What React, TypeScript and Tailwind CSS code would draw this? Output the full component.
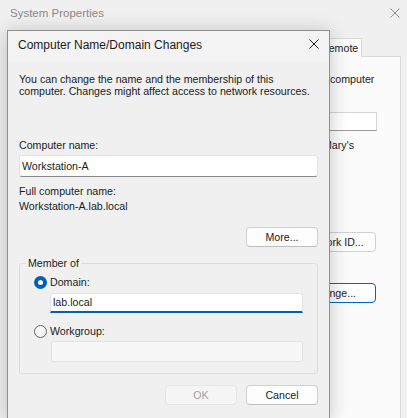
import React from "react";

function CloseIcon({ className }: { className?: string }) {
  return (
    <svg width="10" height="10" viewBox="0 0 10 10" className={className} fill="none">
      <path d="M0.5 0.5L9.5 9.5M9.5 0.5L0.5 9.5" stroke="currentColor" strokeWidth="1" />
    </svg>
  );
}

function Radio({ checked }: { checked?: boolean }) {
  if (checked) {
    return (
      <span className="flex h-[13px] w-[13px] shrink-0 items-center justify-center rounded-full bg-[#005fb8]">
        <span className="h-[5px] w-[5px] rounded-full bg-white" />
      </span>
    );
  }
  return <span className="h-[13px] w-[13px] shrink-0 rounded-full border border-[#616161] bg-[#f7f7f7]" />;
}

function Button({ children, disabled, className = "" }: { children: React.ReactNode; disabled?: boolean; className?: string }) {
  return (
    <button
      className={
        disabled
          ? `flex h-[20px] w-[72px] items-center justify-center rounded-[4px] border border-[#e6e6e6] bg-[#f5f5f5] text-[#a0a0a0] ${className}`
          : `flex h-[20px] w-[72px] items-center justify-center rounded-[4px] border border-[#d0d0d0] border-b-[#bdbdbd] bg-[#fdfdfd] text-[#1b1b1b] ${className}`
      }
    >
      {children}
    </button>
  );
}

export default function App() {
  return (
    <div className="relative h-[418px] w-[407px] overflow-hidden bg-[#f0f0f0] font-['Liberation_Sans',Arial,sans-serif] text-[10.65px] leading-[15px] text-[#1b1b1b]">
      {/* System Properties (inactive window behind) */}
      <div className="flex h-[38px] items-start justify-between pl-[10px] pr-[7px] pt-[6px]">
        <span className="text-[11.5px] text-[#8a8a8a]">System Properties</span>
        <CloseIcon className="mt-[2px] text-[#8d8d8d]" />
      </div>
      <div className="ml-[300px] flex flex-col">
        <div className="relative -mb-px flex h-[19px] items-start self-start ml-[14px] border border-b-0 border-[#d9d9d9] bg-[#fbfbfb] pl-[6px] pr-[3px] pt-[2px]">
          Remote
        </div>
        <div className="flex h-[380px] w-[101px] flex-col border border-[#d9d9d9] bg-[#fbfbfb]">
          <div className="mt-[15px] whitespace-nowrap pl-[29px]">computer</div>
          <div className="mt-[25px] h-[19px] w-[76px] self-end mr-[23px] border border-[#d4d4d4] border-b-[#9a9a9a] bg-white" />
          <div className="mt-[7px] whitespace-nowrap pl-[22px]">Mary's</div>
          <div className="mt-[79px] flex h-[20px] w-[86px] items-center justify-center self-end mr-[24px] rounded-[4px] border border-[#d0d0d0] bg-[#fdfdfd] whitespace-nowrap">
            Network ID...
          </div>
          <div className="mt-[31px] flex h-[20px] w-[86px] items-center justify-center self-end mr-[24px] rounded-[4px] border border-[#0067c0] bg-[#fdfdfd] whitespace-nowrap">
            Change...
          </div>
        </div>
      </div>

      {/* Computer Name/Domain Changes dialog */}
      <div className="absolute left-[7px] top-[30px] z-20 w-[323px] border border-[#8f8f8f] bg-[#f0f0f0] shadow-[0_2px_18px_rgba(0,0,0,0.22)]">
        <div className="flex h-[30px] items-start justify-between bg-[#f3f3f3] pl-[10px] pr-[10px] pt-[7px]">
          <span className="text-[12px] text-[#1b1b1b]">Computer Name/Domain Changes</span>
          <CloseIcon className="mt-[1px] text-[#1b1b1b]" />
        </div>
        <div className="flex flex-col px-[11px] pb-[14px]">
          <p className="mt-[12px] leading-[12px]">
            You can change the name and the membership of this
            <br />
            computer. Changes might affect access to network resources.
          </p>
          <div className="mt-[41px]">Computer name:</div>
          <div className="mt-[2px] flex h-[22px] items-center rounded-[3px] border border-[#e3e3e3] border-b-[#8a8a8a] bg-white pl-[2px]">
            Workstation-A
          </div>
          <div className="mt-[7px]">Full computer name:</div>
          <div>Workstation-A.lab.local</div>
          <Button className="mt-[13px] self-end">More...</Button>

          <fieldset className="mt-[10px] rounded-[3px] border border-[#dcdcdc] pb-[11px] pl-[14px] pr-[14px] pt-[5px]">
            <legend className="-ml-[8px] px-[2px] leading-[13px]">Member of</legend>
            <div className="flex h-[15px] items-center gap-[3px]">
              <Radio checked />
              <span>Domain:</span>
            </div>
            <div className="ml-[16px] mt-[3px] flex h-[20px] items-center rounded-t-[3px] border border-b-2 border-[#e3e3e3] border-b-[#005fb8] bg-white pl-[2px]">
              lab.local
            </div>
            <div className="mt-[11px] flex h-[15px] items-center gap-[3px]">
              <Radio />
              <span>Workgroup:</span>
            </div>
            <div className="ml-[17px] mt-[2px] h-[21px] rounded-[2px] border border-[#e2e2e2] bg-[#f7f7f7]" />
          </fieldset>

          <div className="mt-[11px] flex justify-end gap-[9px]">
            <Button disabled>OK</Button>
            <Button>Cancel</Button>
          </div>
        </div>
      </div>
    </div>
  );
}
